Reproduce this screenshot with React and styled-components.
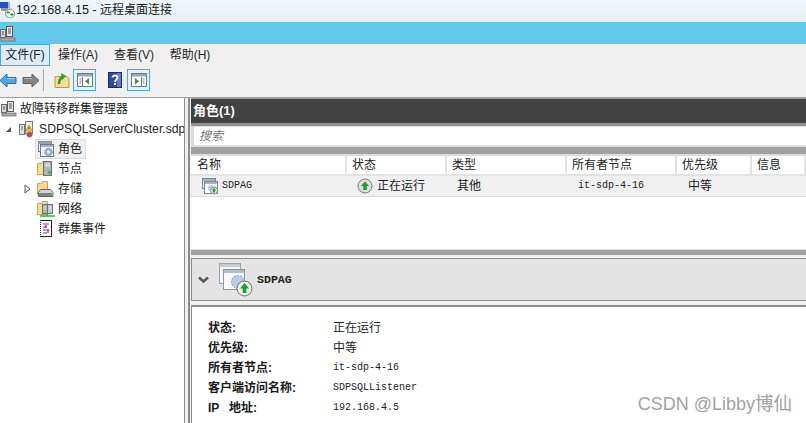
import React from "react";
import styled, { createGlobalStyle } from "styled-components";

const GlobalStyle = createGlobalStyle`
  html, body {
    margin: 0;
    padding: 0;
    width: 806px;
    height: 423px;
    overflow: hidden;
    background: #fff;
  }
  * { box-sizing: border-box; }
  svg { flex: none; display: block; }
`;

const UI_FONT = `"Liberation Sans", "Noto Sans CJK SC", sans-serif`;
const MONO_FONT = `"Liberation Mono", "Noto Sans CJK SC", monospace`;

const Win = styled.div`
  position: relative;
  width: 806px;
  height: 423px;
  overflow: hidden;
  display: flex;
  flex-direction: column;
  font-family: ${UI_FONT};
  font-size: 12px;
  line-height: 16px;
  color: #111;
  background: #fff;
`;

const TitleBar = styled.div`
  height: 22px;
  flex: none;
  display: flex;
  align-items: center;
  gap: 1px;
  padding-bottom: 3px;
  background: linear-gradient(#f0f6fb, #e6eff6);
  font-size: 12.5px;
  color: #1a1a1a;
`;

const TitleCjk = styled.span`
  font-size: 12px;
`;

const BlueBand = styled.div`
  height: 22px;
  flex: none;
  display: flex;
  align-items: center;
  background: #62c8ea;
`;

const MenuBar = styled.div`
  height: 22px;
  flex: none;
  display: flex;
  background: #f0f0f0;
`;

const MenuItem = styled.div`
  display: flex;
  align-items: center;
  justify-content: center;
  width: ${(p) => p.$w}px;
  font-size: 12px;
  color: #222;
  ${(p) => p.$active && `
    background: #dcecfb;
    border: 1px solid #4ba6e8;
  `}
`;

const ToolBar = styled.div`
  height: 32px;
  flex: none;
  display: flex;
  align-items: center;
  padding-bottom: 3px;
  background: #f0f0f0;
  border-bottom: 1px solid #a0a0a0;
`;

const ToolButton = styled.div`
  width: 23px;
  height: 22px;
  flex: none;
  margin-left: ${(p) => p.$ml || 0}px;
  display: flex;
  align-items: center;
  justify-content: center;
  ${(p) => p.$on && `
    background: #e4f0fa;
    border: 1px solid #4ba6e8;
  `}
`;

const ToolSep = styled.div`
  width: 1px;
  height: 22px;
  flex: none;
  margin-left: 1px;
  background: #a8a8a8;
`;

const Body = styled.div`
  flex: 1;
  min-height: 0;
  display: flex;
  background: #f0f0f0;
`;

const TreePane = styled.div`
  width: 185px;
  flex: none;
  background: #fff;
  border-right: 1px solid #8c8c8c;
  overflow: hidden;
`;

const TreeRow = styled.div`
  height: 20px;
  display: flex;
  align-items: center;
  gap: 3px;
  padding-left: ${(p) => p.$indent}px;
  white-space: nowrap;
  font-size: ${(p) => p.$fs || 12}px;
  color: #222;
`;

const TreeRoot = styled(TreeRow)`
  height: 21px;
`;

const TreeArrow = styled.div`
  width: ${(p) => p.$w}px;
  flex: none;
  display: flex;
  align-items: center;
`;

const TreeItem = styled.div`
  display: flex;
  align-items: center;
  gap: 3px;
  height: 20px;
  padding: 0 3px 0 1px;
  border: 1px solid transparent;
  ${(p) => p.$selected && `
    background: #f0f0f0;
    border-color: #dcdcdc;
  `}
`;

const RightPane = styled.div`
  flex: 1;
  min-width: 0;
  margin-left: 3px;
  padding-left: 1px;
  display: flex;
  flex-direction: column;
  border-left: 2px solid #8c8c8c;
  background: #f0f0f0;
`;

const RolesHeader = styled.div`
  height: 28px;
  flex: none;
  display: flex;
  align-items: center;
  padding-left: 2px;
  background: #424242;
  border-top: 1px solid #9a9a9a;
  border-bottom: 3px solid #8f8f8f;
  color: #fff;
  font-weight: 700;
  font-size: 13px;
`;

const SearchWrap = styled.div`
  height: 21px;
  flex: none;
  padding: 1px 0 2px 3px;
  background: #dcdcdc;
`;

const SearchBox = styled.div`
  height: 100%;
  display: flex;
  align-items: center;
  padding-left: 5px;
  background: #fff;
  font-style: italic;
  font-size: 12px;
  color: #777;
`;

const GreyStrip = styled.div`
  height: ${(p) => p.$h}px;
  flex: none;
  background: #a0a0a0;
  border-top: ${(p) => p.$top || 0}px solid #d8d8d8;
  border-bottom: ${(p) => p.$bottom || 0}px solid #dcdcdc;
`;

const TableRow = styled.div`
  display: grid;
  grid-template-columns: 155px 100px 120px 110px 75px 1fr;
  height: ${(p) => p.$h}px;
  flex: none;
  padding-left: 1px;
  align-items: center;
  background: ${(p) => p.$bg || "#fff"};
  border-bottom: ${(p) => p.$line || "none"};
`;

const HeadCell = styled.div`
  height: 100%;
  display: flex;
  align-items: center;
  padding-left: 5px;
  border-right: 2px solid #e3e3e3;
  color: #222;
`;

const Cell = styled.div`
  display: flex;
  align-items: center;
  gap: ${(p) => p.$gap || 0}px;
  padding-left: ${(p) => p.$pl}px;
  font-family: ${(p) => (p.$mono ? MONO_FONT : UI_FONT)};
  font-size: ${(p) => (p.$mono ? 10 : 12)}px;
  color: #222;
`;

const EmptyList = styled.div`
  flex: 1;
  min-height: 0;
  background: #fff;
`;

const DetailHeader = styled.div`
  height: 43px;
  flex: none;
  display: flex;
  align-items: center;
  margin-top: 3px;
  padding-left: 6px;
  background: #e4e4e4;
  border: 1px solid #8c8c8c;
  border-right: none;
`;

const DetailName = styled.div`
  margin-left: 4px;
  font-family: ${MONO_FONT};
  font-size: 11.6px;
  font-weight: 700;
  color: #222;
`;

const Chevron = styled.div`
  width: 21px;
  flex: none;
`;

const DetailBody = styled.div`
  height: 118px;
  flex: none;
  margin-top: 4px;
  padding: 11px 0 0 16px;
  border-top: 2px solid #8c8c8c;
  border-left: 1px solid #8c8c8c;
  background: #fff;
`;

const DetailRow = styled.div`
  height: 20px;
  display: grid;
  grid-template-columns: 125px 1fr;
  align-items: center;
`;

const DetailLabel = styled.div`
  font-weight: 700;
  font-size: 12px;
  color: #1a1a1a;
  white-space: pre;
`;

const DetailValue = styled.div`
  font-family: ${(p) => (p.$mono ? MONO_FONT : UI_FONT)};
  font-size: ${(p) => (p.$mono ? 10 : 12)}px;
  color: #222;
`;

const Watermark = styled.div`
  position: absolute;
  right: 14px;
  bottom: 9px;
  font-family: ${UI_FONT};
  font-size: 18px;
  line-height: 20px;
  color: #a2a2a2;
`;

const WatermarkCjk = styled.span`
  font-size: 18.5px;
`;

const ServerIcon = () => (
  <svg width="16" height="17" viewBox="0 0 16 17">
    <rect x="0.5" y="4.500" width="5" height="8" fill="#d5d7da" stroke="#6a6a6a" />
    <rect x="6.500" y="1.500" width="6" height="10" fill="#e6e7e9" stroke="#5a5a5a" />
    <path d="M8 4h3M8 6h3M8 8h3M2 7h2M2 9h2" stroke="#555" />
    <rect x="1" y="13" width="14" height="3" fill="#a9adb2" stroke="#666" strokeWidth="0.7" />
  </svg>
);

const RdpIcon = () => (
  <svg width="15" height="16" viewBox="0 0 15 16">
    <rect x="0" y="0" width="8" height="6" fill="#2250c0" />
    <rect x="8" y="0" width="2" height="6" fill="#a8b6d8" />
    <rect x="1" y="6" width="7" height="3" fill="#8f9ab0" />
    <circle cx="10" cy="11.500" r="4.500" fill="#f6f6f6" stroke="#7a8f7a" />
    <path d="M7 10.500h3M8.500 9l-1.500 1.500 1.500 1.500M13 12.500h-3M11.500 11l1.500 1.500-1.500 1.500" fill="none" stroke="#2b9a2b" />
  </svg>
);

const ArrowIcon = ({ dir, color, edge }) => (
  <svg width="18" height="15" viewBox="0 0 18 15">
    <path
      d={dir === "left" ? "M1 7.500 8 1v3.500h9v6H8V14z" : "M17 7.500 10 1v3.500H1v6h9V14z"}
      fill={color}
      stroke={edge}
      strokeLinejoin="round"
    />
    <path
      d={dir === "left" ? "M8 5.500h8" : "M2 5.500h8"}
      stroke="#fff"
      strokeOpacity="0.45"
    />
  </svg>
);

const FolderUpIcon = () => (
  <svg width="16" height="16" viewBox="0 0 16 16">
    <path d="M1 4.500h12l2 2v9H1z" fill="#f4dd97" stroke="#b59a4a" />
    <path d="M5 12c0-4 1-6 4-7" fill="none" stroke="#2f9a35" strokeWidth="2.500" />
    <path d="M7 1l5 3-4 4z" fill="#2f9a35" />
  </svg>
);

const PaneIcon = ({ side }) => (
  <svg width="16" height="15" viewBox="0 0 16 15">
    <rect x="0.500" y="0.500" width="15" height="13" fill="#fff" stroke="#6d7a88" />
    <rect x="1" y="1" width="14" height="2.500" fill="#9aa5b2" />
    {side === "left" ? (
      <>
        <path d="M5.500 4v9" stroke="#6d7a88" />
        <path d="M2.500 6h2M2.500 8h2M2.500 10h2" stroke="#7b8794" />
        <path d="M12 5v6.500l-4-3.250z" fill="#2f9a35" />
      </>
    ) : (
      <>
        <path d="M10.500 4v9" stroke="#6d7a88" />
        <path d="M11.500 6h2M11.500 8h2M11.500 10h2" stroke="#7b8794" />
        <path d="M4 5v6.500l4-3.250z" fill="#2f9a35" />
      </>
    )}
  </svg>
);

const HelpIcon = () => (
  <svg width="14" height="16" viewBox="0 0 14 16">
    <rect x="0.500" y="0.500" width="13" height="15" fill="#34479f" stroke="#1c2a70" />
    <rect x="9" y="1" width="4" height="14" fill="#6a7cc8" />
    <path d="M4.500 5.500C4.500 2.800 9.500 2.800 9.500 5.500 9.500 7.500 7 7.500 7 10" fill="none" stroke="#fff" strokeWidth="1.800" />
    <rect x="6" y="11" width="2" height="2" fill="#fff" />
  </svg>
);

const ClusterIcon = () => (
  <svg width="18" height="18" viewBox="0 0 18 18">
    <rect x="1.500" y="4.500" width="5" height="10" fill="#dfe1e4" stroke="#777" />
    <rect x="7.500" y="1.500" width="7" height="12" fill="#eceef0" stroke="#777" />
    <path d="M3 7h2M3 9h2" stroke="#2f9a35" />
    <path d="M11 5l3.500 6h-7z" fill="#f3c41f" stroke="#a78510" strokeWidth="0.500" />
    <path d="M11 7v2" stroke="#333" />
    <circle cx="11.500" cy="14.500" r="2.800" fill="#c8404a" stroke="#8a8a8a" strokeWidth="0.500" />
  </svg>
);

const RolesIcon = () => (
  <svg width="18" height="18" viewBox="0 0 18 18">
    <rect x="1.500" y="1.500" width="13" height="10" fill="#eef0f3" stroke="#6f7b88" />
    <rect x="1.500" y="1.500" width="13" height="2.500" fill="#98a4b2" />
    <rect x="3.500" y="4.500" width="13" height="12" fill="#f8f9fa" stroke="#6f7b88" />
    <rect x="4" y="5" width="12" height="2" fill="#a9b4c0" />
    <circle cx="11.500" cy="12" r="3.800" fill="#9db6d6" stroke="#5c81ad" strokeDasharray="1.500 1" />
    <circle cx="11.500" cy="12" r="1.500" fill="#eef3f8" />
  </svg>
);

const FolderNodeIcon = ({ kind }) => (
  <svg width="18" height="18" viewBox="0 0 18 18">
    <path d="M0.500 3.500h4l1 -2h5v13h-10z" fill="#f3dd95" stroke="#c2a657" />
    {kind === "node" && (
      <>
        <rect x="6.500" y="1.500" width="8" height="14" fill="#aeb3b9" stroke="#66707a" />
        <path d="M8 4h5M8 6h5" stroke="#eef0f2" />
        <rect x="11" y="11" width="3" height="3" fill="#2fc04e" />
      </>
    )}
    {kind === "disk" && (
      <>
        <path d="M3.500 9.500h10l2.500 3v4H1.500v-4z" fill="#d2d4d8" stroke="#666" />
        <rect x="2" y="13" width="13" height="3" fill="#7f8388" />
        <rect x="13" y="13.500" width="2" height="2" fill="#2fc04e" />
      </>
    )}
    {kind === "net" && (
      <>
        <rect x="5.500" y="4.500" width="5" height="9" fill="#a9b0b8" stroke="#66707a" />
        <rect x="10.500" y="4.500" width="5" height="9" fill="#c4c9ce" stroke="#66707a" />
        <path d="M7 7h2M12 7h2M7 9h2M12 9h2" stroke="#eef0f2" />
        <path d="M10.500 13.500v2M3 16h15" stroke="#1fb24a" strokeWidth="1.600" />
      </>
    )}
  </svg>
);

const EventsIcon = () => (
  <svg width="18" height="18" viewBox="0 0 18 18">
    <rect x="3.500" y="0.500" width="11" height="16" fill="#fff" stroke="#222" />
    <path d="M3.500 1v15" stroke="#fff" strokeDasharray="1 1" />
    <path d="M6 4h6M6 7h4M6 10h6M6 13h4" stroke="#6a3aa0" />
    <path d="M9 5v3M11 9v4" stroke="#d0404a" strokeWidth="1.500" />
  </svg>
);

const RunningIcon = () => (
  <svg width="16" height="16" viewBox="0 0 16 16">
    <circle cx="8" cy="8" r="7" fill="#dedede" stroke="#7a7a7a" />
    <path d="M8 3.500 12 8H9.800v4H6.200V8H4z" fill="#1f9d35" />
  </svg>
);

const RoleRunIcon = () => (
  <svg width="17" height="17" viewBox="0 0 17 17">
    <rect x="0.500" y="0.500" width="13" height="10" fill="#f0f2f4" stroke="#7b8794" />
    <rect x="1" y="1" width="12" height="2" fill="#a9b4c0" />
    <rect x="2.500" y="3.500" width="13" height="12" fill="#fbfbfc" stroke="#7b8794" />
    <rect x="3" y="4" width="12" height="2" fill="#a9b4c0" />
    <circle cx="9" cy="10" r="3" fill="#b9cde3" />
    <circle cx="12" cy="12.500" r="3.500" fill="#e8e8e8" stroke="#8a8a8a" />
    <path d="M12 9.800 14.200 12.500h-1.200v2h-2v-2H9.800z" fill="#1f9d35" />
  </svg>
);

const BigRoleIcon = () => (
  <svg width="34" height="34" viewBox="0 0 34 34">
    <rect x="0.500" y="0.500" width="21" height="20" fill="#f6f7f8" stroke="#9aa4af" />
    <rect x="1" y="1" width="20" height="3" fill="#c5ccd4" />
    <rect x="4.500" y="6.500" width="21" height="20" fill="#fafbfc" stroke="#8d98a5" />
    <rect x="5" y="7" width="20" height="3" fill="#b4bdc8" />
    <circle cx="19" cy="19" r="6.500" fill="#b9cde3" stroke="#7d98b8" strokeDasharray="2 1.200" />
    <circle cx="25.500" cy="25.500" r="7.500" fill="#ededed" stroke="#6f6f6f" />
    <path d="M25.500 20 30 25.500h-2.700V30h-3.600v-4.500H21z" fill="#1f9d35" />
  </svg>
);

const ExpandedArrow = () => (
  <svg width="7" height="7" viewBox="0 0 7 7">
    <path d="M6 1v5H1z" fill="#555" />
  </svg>
);

const CollapsedArrow = () => (
  <svg width="7" height="10" viewBox="0 0 7 10">
    <path d="M1 1l5 4-5 4z" fill="#fff" stroke="#555" />
  </svg>
);

const ChevronIcon = () => (
  <svg width="11" height="8" viewBox="0 0 11 8">
    <path d="M1 1.500 5.500 5.500 10 1.500" fill="none" stroke="#5a5a5a" strokeWidth="2.500" />
  </svg>
);

const columns = ["名称", "状态", "类型", "所有者节点", "优先级", "信息"];

const details = [
  { label: "状态:", value: "正在运行" },
  { label: "优先级:", value: "中等" },
  { label: "所有者节点:", value: "it-sdp-4-16", mono: true },
  { label: "客户端访问名称:", value: "SDPSQLListener", mono: true },
  { label: "IP   地址:", value: "192.168.4.5", mono: true },
];

export default function App() {
  return (
    <Win>
      <GlobalStyle />
      <TitleBar>
        <RdpIcon />
        <span>192.168.4.15 - <TitleCjk>远程桌面连接</TitleCjk></span>
      </TitleBar>
      <BlueBand>
        <ServerIcon />
      </BlueBand>
      <MenuBar>
        <MenuItem $w={50} $active>文件(F)</MenuItem>
        <MenuItem $w={56}>操作(A)</MenuItem>
        <MenuItem $w={56}>查看(V)</MenuItem>
        <MenuItem $w={56}>帮助(H)</MenuItem>
      </MenuBar>
      <ToolBar>
        <ToolButton $ml={-4}><ArrowIcon dir="left" color="#4aa8e8" edge="#1f6fb5" /></ToolButton>
        <ToolButton><ArrowIcon dir="right" color="#858585" edge="#5e5e5e" /></ToolButton>
        <ToolSep />
        <ToolButton $ml={6}><FolderUpIcon /></ToolButton>
        <ToolButton $on><PaneIcon side="left" /></ToolButton>
        <ToolButton $ml={7}><HelpIcon /></ToolButton>
        <ToolButton $ml={1} $on><PaneIcon side="right" /></ToolButton>
      </ToolBar>
      <Body>
        <TreePane>
          <TreeRoot $indent={1}>
            <ServerIcon />
            <span>故障转移群集管理器</span>
          </TreeRoot>
          <TreeRow $indent={5} $fs={12.2}>
            <TreeArrow $w={10}><ExpandedArrow /></TreeArrow>
            <ClusterIcon />
            <span>SDPSQLServerCluster.sdp</span>
          </TreeRow>
          <TreeRow $indent={35}>
            <TreeItem $selected><RolesIcon />角色</TreeItem>
          </TreeRow>
          <TreeRow $indent={35}>
            <TreeItem><FolderNodeIcon kind="node" />节点</TreeItem>
          </TreeRow>
          <TreeRow $indent={24}>
            <TreeArrow $w={8}><CollapsedArrow /></TreeArrow>
            <TreeItem><FolderNodeIcon kind="disk" />存储</TreeItem>
          </TreeRow>
          <TreeRow $indent={35}>
            <TreeItem><FolderNodeIcon kind="net" />网络</TreeItem>
          </TreeRow>
          <TreeRow $indent={35}>
            <TreeItem><EventsIcon />群集事件</TreeItem>
          </TreeRow>
        </TreePane>
        <RightPane>
          <RolesHeader>角色(1)</RolesHeader>
          <SearchWrap>
            <SearchBox>搜索</SearchBox>
          </SearchWrap>
          <GreyStrip $h={9} $bottom={2} />
          <TableRow $h={20} $line="2px solid #e3e3e3">
            {columns.map((c) => (
              <HeadCell key={c}>{c}</HeadCell>
            ))}
          </TableRow>
          <TableRow $h={21} $bg="#f0f0f0" $line="1px solid #dcdcdc">
            <Cell $pl={10} $gap={3} $mono><RoleRunIcon />SDPAG</Cell>
            <Cell $pl={10} $gap={4}><RunningIcon />正在运行</Cell>
            <Cell $pl={10}>其他</Cell>
            <Cell $pl={11} $mono>it-sdp-4-16</Cell>
            <Cell $pl={11}>中等</Cell>
            <Cell $pl={0} />
          </TableRow>
          <EmptyList />
          <GreyStrip $h={6} $top={1} />
          <DetailHeader>
            <Chevron><ChevronIcon /></Chevron>
            <BigRoleIcon />
            <DetailName>SDPAG</DetailName>
          </DetailHeader>
          <DetailBody>
            {details.map((d) => (
              <DetailRow key={d.label}>
                <DetailLabel>{d.label}</DetailLabel>
                <DetailValue $mono={d.mono}>{d.value}</DetailValue>
              </DetailRow>
            ))}
          </DetailBody>
        </RightPane>
      </Body>
      <Watermark>CSDN @Libby<WatermarkCjk>博仙</WatermarkCjk></Watermark>
    </Win>
  );
}
